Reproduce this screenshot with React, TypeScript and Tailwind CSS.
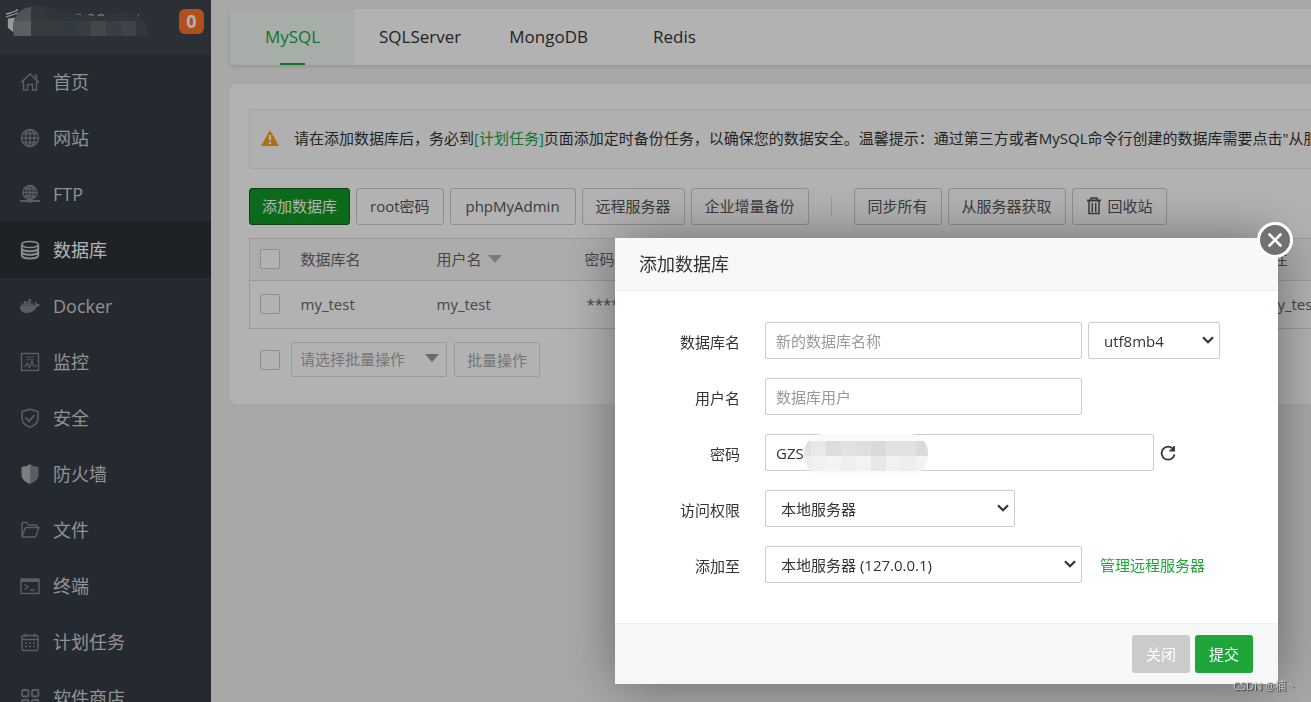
import type { ReactNode, SelectHTMLAttributes } from "react";
import { FaDocker } from "react-icons/fa";

type IconProps = { children: ReactNode };

function Icon({ children }: IconProps) {
  return (
    <svg viewBox="0 0 20 20" className="h-5 w-5" fill="none" stroke="currentColor" strokeWidth="1.4" aria-hidden="true">
      {children}
    </svg>
  );
}

const menu = [
  {
    label: "首页",
    icon: (
      <Icon>
        <path d="M1 10.500 10 2l9 8.500M14.500 3.500h2v4M3.500 9v9h4v-5.500h5V18h4V9" />
      </Icon>
    ),
  },
  {
    label: "网站",
    icon: (
      <Icon>
        <circle cx="10" cy="10" r="8.500" />
        <ellipse cx="10" cy="10" rx="4.500" ry="8.500" />
        <path d="M10 1.500v17M1.500 10h17M3 5.500h14M3 14.500h14" />
      </Icon>
    ),
  },
  {
    label: "FTP",
    icon: (
      <Icon>
        <circle cx="10" cy="8.500" r="7" />
        <ellipse cx="10" cy="8.500" rx="3.500" ry="7" />
        <path d="M10 1.500v14M3 8.500h14M4.500 5h11M4.500 12h11" />
        <path d="M0 17h20M7.500 17.500h5" strokeWidth="2.200" />
      </Icon>
    ),
  },
  {
    label: "数据库",
    active: true,
    icon: (
      <Icon>
        <ellipse cx="10" cy="4.500" rx="8.200" ry="3" />
        <path d="M1.800 4.500v11c0 1.700 3.700 3 8.200 3s8.200-1.300 8.200-3v-11M1.800 8.200c0 1.700 3.700 3 8.200 3s8.200-1.300 8.200-3M1.800 11.800c0 1.700 3.700 3 8.200 3s8.200-1.300 8.200-3" strokeWidth="1.900" />
      </Icon>
    ),
  },
  { label: "Docker", icon: <FaDocker className="h-5 w-5" /> },
  {
    label: "监控",
    icon: (
      <Icon>
        <rect x="1.500" y="1.500" width="17" height="17" />
        <path d="M6 5h8M6 7.500h8" opacity=".5" />
        <path d="M3 14h2.500l2-3 2 5 2.500-7 1.500 5H17" strokeWidth="1.100" />
      </Icon>
    ),
  },
  {
    label: "安全",
    icon: (
      <Icon>
        <path d="M10 1.200 18 3.500v7c0 4-3.500 7-8 8.700-4.500-1.700-8-4.700-8-8.700v-7Z" strokeWidth="1.600" />
        <path d="m5.500 9.500 3.500 3.800L14.500 7" strokeWidth="1.700" />
      </Icon>
    ),
  },
  {
    label: "防火墙",
    icon: (
      <Icon>
        <path d="M10 0 7 2 1.500 3v8c0 4 3.500 7 8.500 9Z" fill="#b0b3b6" stroke="none" />
        <path d="m10 0 3 2 5.500 1v8c0 4-3.500 7-8.500 9Z" fill="#84878b" stroke="none" />
      </Icon>
    ),
  },
  {
    label: "文件",
    icon: (
      <Icon>
        <path d="M2 17V3.500q0-1 1-1h4L8.500 5H16q1 0 1 1v1.500M2 17h13.500L19 7.500H6.500q-1 0-1.500 1Z" strokeLinejoin="round" />
      </Icon>
    ),
  },
  {
    label: "终端",
    icon: (
      <Icon>
        <rect x="1" y="3" width="18" height="14.500" />
        <path d="M1 4.500h18" strokeWidth="3" />
        <path d="m4.500 8.500 3.500 2.500-3.500 2.500M10 14h4.500" />
      </Icon>
    ),
  },
  {
    label: "计划任务",
    icon: (
      <Icon>
        <rect x="2" y="3.500" width="16" height="15" rx="1.500" />
        <path d="M2 7.500h16M5.500 1.500v3.500M14.500 1.500v3.500" />
        <path d="M5 11h10M5 14.500h10" strokeDasharray="2 2" />
      </Icon>
    ),
  },
  {
    label: "软件商店",
    icon: (
      <Icon>
        <g strokeWidth="1.800">
          <rect x="2" y="2" width="6.500" height="6.500" rx="1.500" />
          <rect x="12" y="2" width="6.500" height="6.500" rx="1.500" />
          <rect x="2" y="12" width="6.500" height="6.500" rx="1.500" />
          <rect x="12" y="12" width="6.500" height="6.500" rx="1.500" />
        </g>
      </Icon>
    ),
  },
];

const tabs = ["MySQL", "SQLServer", "MongoDB", "Redis"];

const button = "h-[37px] shrink-0 rounded-[3px] border border-[#ccc] px-[13px] pb-0.5 text-[#555]";
const field = "h-[37px] rounded-[2px] border border-[#ccc] bg-white text-[#333]";
const input = field + " px-2.5 placeholder:text-[#999]";
const checkbox = "block h-5 w-5 shrink-0 appearance-none rounded-[2px] border border-[#ccc] bg-white";

function Sidebar() {
  return (
    <aside className="w-[211px] shrink-0 overflow-hidden bg-[#363d46]">
      <div className="flex h-[54px] items-start justify-between bg-[#3d454e] pr-[7px]">
        <svg viewBox="0 0 160 54" className="h-[54px] w-40" aria-hidden="true">
          <g stroke="#e0e0e0" strokeWidth="1.300" fill="none">
            <path d="m6 14 5-1M10 13l7-2.500V9M6 17l12-4M8 19.500l8-1" />
            <path d="M8.500 19.500v8l5 4v-13Z" fill="#ddd" />
            <path d="M76 14.500h5M88 16q3-3 6 0M98 16q3-3 6 0M113 14.500h5M138 15h1" stroke="#b5b5b5" />
          </g>
          <clipPath id="host-mask">
            <path d="M14 36C13 29 12 24 16 16 22 7 33 5 45 7c11 3 24 7 38 8 10 1 17 1 23 1 12-6 21-5 30-1 8 4 12 12 13 21Z" />
          </clipPath>
          <g clipPath="url(#host-mask)">
            <path fill="#454d54" d="M0 0h160v36H0z" />
            <path fill="#73787d" d="M13 5h18v16H13z" />
            <path fill="#85898d" d="M13 21h18v15H13z" />
            <path fill="#4a5157" d="M31 5h15v16H31z" />
            <path fill="#4e555a" d="M31 21h15v15H31zM46 21h15v15H46z" />
            <path fill="#475460" d="M61 21h15v15H61z" />
            <path fill="#50585e" d="M76 21h15v15H76z" />
            <path fill="#636869" d="M91 21h15v15H91z" />
            <path fill="#51595f" d="M106 21h15v15h-15z" />
            <path fill="#56606b" d="M121 21h15v15h-15z" />
            <path fill="#485058" d="M136 5h15v31h-15z" />
          </g>
        </svg>
        <span className="mt-[9px] flex h-[25px] w-[25px] items-center justify-center rounded-md bg-[#ff7226] pb-0.5 text-lg leading-none font-bold text-white">
          0
        </span>
      </div>
      <nav>
        {menu.map((item) => (
          <a
            key={item.label}
            href="#"
            className={
              item.active
                ? "flex h-14 items-center gap-[13px] bg-[#2c3138] pl-5 text-lg text-white"
                : "flex h-14 items-center gap-[13px] pl-5 text-lg text-[#d0d0d0]"
            }
          >
            <span className={item.active ? "text-[#c8c8c8]" : "text-[#83878c]"}>{item.icon}</span>
            {item.label}
          </a>
        ))}
      </nav>
    </aside>
  );
}

function Toolbar() {
  return (
    <div className="mt-[19px] flex items-center gap-1.5">
      <button className="h-[37px] shrink-0 rounded-[3px] border border-[#145c20] bg-[#109a28] px-3 pb-0.5 text-white">
        添加数据库
      </button>
      <button className={button}>root密码</button>
      <button className={button + " min-w-[126px]"}>phpMyAdmin</button>
      <button className={button}>远程服务器</button>
      <button className={button}>企业增量备份</button>
      <span className="mx-4 h-5 w-px bg-[#ddd]" />
      <button className={button}>同步所有</button>
      <button className={button}>从服务器获取</button>
      <button className={button + " flex items-center gap-1.5"}>
        <svg viewBox="0 0 16 18" className="h-[18px] w-4" fill="none" stroke="currentColor" strokeWidth="1.500" aria-hidden="true">
          <path d="M1 3.500h14" strokeWidth="2" />
          <path d="M5 3V1h6v2M3 4v12.500h10V4M6.300 6v9M9.700 6v9" />
        </svg>
        回收站
      </button>
    </div>
  );
}

function DatabaseTable() {
  return (
    <table className="mt-[13px] w-full table-fixed border border-[#ddd] text-left text-[#666]">
      <colgroup>
        <col className="w-[41px]" />
        <col className="w-[136px]" />
        <col className="w-[148px]" />
        <col />
        <col className="w-[234px]" />
      </colgroup>
      <thead className="bg-[#f6f6f6]">
        <tr className="h-[42px] border-b border-[#ddd]">
          <th className="pb-0.5 pl-2.5">
            <input type="checkbox" aria-label="全选" className={checkbox} />
          </th>
          <th className="pb-0.5 pl-2.5 font-normal">数据库名</th>
          <th className="pb-0.5 pl-2.5 font-normal">
            <span className="flex items-center gap-1.5">
              用户名
              <svg viewBox="0 0 14 8" className="h-2 w-3.5" fill="#b0b0b0" aria-hidden="true">
                <path d="M0 0h14L7 8Z" />
              </svg>
            </span>
          </th>
          <th className="pb-0.5 pl-2.5 font-normal">密码</th>
          <th className="pb-0.5 pl-2.5 font-normal">备注</th>
        </tr>
      </thead>
      <tbody>
        <tr className="h-[48px]">
          <td className="pb-0.5 pl-2.5">
            <input type="checkbox" aria-label="my_test" className={checkbox} />
          </td>
          <td className="pb-0.5 pl-2.5">my_test</td>
          <td className="pb-0.5 pl-2.5">my_test</td>
          <td className="pb-0.5 pl-3">**********</td>
          <td className="pb-0.5 pl-4">my_test</td>
        </tr>
      </tbody>
    </table>
  );
}

function BatchBar() {
  return (
    <div className="mt-[13px] flex items-center pl-[11px]">
      <input type="checkbox" aria-label="全选" className={checkbox} />
      <div className="relative ml-[11px]">
        <select
          aria-label="批量操作"
          className="block h-[35px] w-[156px] appearance-none rounded-[2px] border border-[#ddd] bg-white pb-0.5 pl-2 text-[#aaa]"
        >
          <option>请选择批量操作</option>
        </select>
        <svg viewBox="0 0 14 8" className="pointer-events-none absolute top-3 right-2 h-2 w-3.5" fill="#999" aria-hidden="true">
          <path d="M0 0h14L7 8Z" />
        </svg>
      </div>
      <button className="ml-[7px] h-[35px] rounded-[3px] border border-[#ddd] px-3 text-[#aaa]">批量操作</button>
    </div>
  );
}

const maskTop = ["#e2e2e2", "#e9e9e9", "#dddddd", "#e2e2e2", "#dfdfdf", "#dadada", "#e2e2e2", "#e2e2e2", "#dadada"];
const maskBottom = ["#eeeeee", "#f1f1f1", "#f4f4f4", "#efefef", "#f3f3f3", "#e8e8e8", "#f1f1f1", "#eeeeee", "#f3f3f3"];

function PasswordMask() {
  return (
    <svg viewBox="0 0 124 41" className="pointer-events-none absolute top-0 left-[39px] h-[41px] w-[124px]" aria-hidden="true">
      <clipPath id="password-mask">
        <rect width="124" height="41" rx="19" />
      </clipPath>
      <g clipPath="url(#password-mask)">
        <rect width="124" height="41" fill="#fafafa" />
        {maskTop.map((fill, i) => (
          <rect key={i} x={i * 15 - 8} y="7" width="15" height="15" fill={fill} />
        ))}
        {maskBottom.map((fill, i) => (
          <rect key={i} x={i * 15 - 8} y="22" width="15" height="15" fill={fill} />
        ))}
      </g>
    </svg>
  );
}

function Select({ className, ...props }: SelectHTMLAttributes<HTMLSelectElement>) {
  return (
    <div className="relative">
      <select className={field + " block appearance-none pr-6 pl-[15px] " + className} {...props} />
      <svg
        viewBox="0 0 12 8"
        className="pointer-events-none absolute top-3.5 right-1.5 h-2 w-3"
        fill="none"
        stroke="#333"
        strokeWidth="2.200"
        aria-hidden="true"
      >
        <path d="m1 1.200 5 5 5-5" />
      </svg>
    </div>
  );
}

function Row({ id, label, children }: { id: string; label: string; children: ReactNode }) {
  return (
    <div className="flex items-center">
      <label htmlFor={id} className="w-[125px] pt-0.5 text-right">
        {label}
      </label>
      <div className="ml-[25px] flex items-center gap-1.5">{children}</div>
    </div>
  );
}

function AddDatabaseDialog() {
  return (
    <div
      role="dialog"
      aria-labelledby="dialog-title"
      className="fixed top-[238px] right-[33px] w-[663px] bg-white text-[#333] shadow-[1px_1px_50px_rgba(0,0,0,0.4)]"
    >
      <button aria-label="关闭窗口" className="absolute -top-4 -right-[15px] h-9 w-9">
        <svg viewBox="0 0 36 36" className="h-9 w-9" aria-hidden="true">
          <circle cx="18" cy="18" r="16.500" fill="#717171" stroke="#fff" strokeWidth="3" />
          <path d="m12.500 12.500 11 11M23.500 12.500l-11 11" stroke="#fff" strokeWidth="2.600" strokeLinecap="round" />
        </svg>
      </button>
      <h2 id="dialog-title" className="flex h-[53px] items-center border-b border-[#eee] bg-[#f8f8f8] pl-6 text-lg">
        添加数据库
      </h2>
      <form>
        <div className="flex flex-col gap-[19px] pt-[31px] pb-10">
          <Row id="db-name" label="数据库名">
            <input id="db-name" placeholder="新的数据库名称" className={input + " w-[317px]"} />
            <Select aria-label="编码" className="w-[132px]">
              <option>utf8mb4</option>
            </Select>
          </Row>
          <Row id="db-user" label="用户名">
            <input id="db-user" placeholder="数据库用户" className={input + " w-[317px]"} />
          </Row>
          <Row id="db-password" label="密码">
            <div className="relative">
              <input id="db-password" defaultValue="GZS" className={input + " block w-[389px]"} />
              <PasswordMask />
            </div>
            <button type="button" aria-label="随机密码">
              <svg viewBox="0 0 16 16" className="h-4 w-4" fill="none" stroke="#333" strokeWidth="1.800" aria-hidden="true">
                <path d="M13.500 4.500A6.500 6.500 0 1 0 14.500 9.500M14 1v4.500H9.500" />
              </svg>
            </button>
          </Row>
          <Row id="db-access" label="访问权限">
            <Select id="db-access" className="w-[250px]">
              <option>本地服务器</option>
            </Select>
          </Row>
          <Row id="db-server" label="添加至">
            <Select id="db-server" className="w-[317px]">
              <option>本地服务器 (127.0.0.1)</option>
            </Select>
            <a href="#" className="ml-3 text-[#20a53a]">
              管理远程服务器
            </a>
          </Row>
        </div>
        <div className="flex h-[61px] items-center justify-end gap-[5px] border-t border-[#edf1f2] bg-[#f6f8f8] pr-[25px]">
          <button type="button" className="h-[38px] rounded-[3px] bg-[#cbcbcb] px-3.5 text-white">
            关闭
          </button>
          <button type="submit" className="h-[38px] rounded-[3px] bg-[#20a53a] px-3.5 text-white">
            提交
          </button>
        </div>
      </form>
    </div>
  );
}

export default function App() {
  return (
    <div className="flex h-screen overflow-hidden bg-[#f1f1f1] font-['Open_Sans','Noto_Sans_CJK_SC',sans-serif] text-[15px] leading-5 text-[#333]">
      <Sidebar />
      <main className="min-w-[1290px] flex-1 py-[9px] pl-[19px]">
        <div className="flex h-14 rounded-md bg-white text-[17px] shadow-[0_2px_4px_rgba(0,0,0,0.12)]">
          {tabs.map((tab, i) => (
            <button
              key={tab}
              className={
                i === 0
                  ? "flex min-w-[125px] flex-col items-center justify-between rounded-l-md bg-[#eff9f3] px-[25px] pt-[18px] text-[#20a53a] after:h-0.5 after:w-[25px] after:bg-[#20a53a]"
                  : "min-w-[125px] px-6"
              }
            >
              {tab}
            </button>
          ))}
        </div>
        <section className="mt-[19px] rounded-md bg-white px-[19px] pt-[25px] pb-[27px]">
          <div className="flex h-[60px] items-center gap-[15px] rounded-[3px] border border-[#e8e8e8] bg-[#fdfdfd] pb-0.5 pl-[11px] whitespace-nowrap">
            <svg viewBox="0 0 18 16" className="h-4 w-[18px] shrink-0" aria-hidden="true">
              <path d="M9 0 18 16H0Z" fill="#f8a11c" />
              <path d="M9 5v5.500M9 12v2" stroke="#fff" strokeWidth="2.200" />
            </svg>
            <p>
              请在添加数据库后，务必到
              <a href="#" className="text-[#20a53a]">[计划任务]</a>
              页面添加定时备份任务，以确保您的数据安全。温馨提示：通过第三方或者MySQL命令行创建的数据库需要点击"从服务器获取"
            </p>
          </div>
          <Toolbar />
          <DatabaseTable />
          <BatchBar />
        </section>
      </main>
      <div className="fixed inset-0 bg-black/30" />
      <AddDatabaseDialog />
      <div className="fixed right-3.5 bottom-1.5 text-[11px] text-[#ccc] [text-shadow:1px_1px_1px_#333]">CSDN @楠丶</div>
    </div>
  );
}
